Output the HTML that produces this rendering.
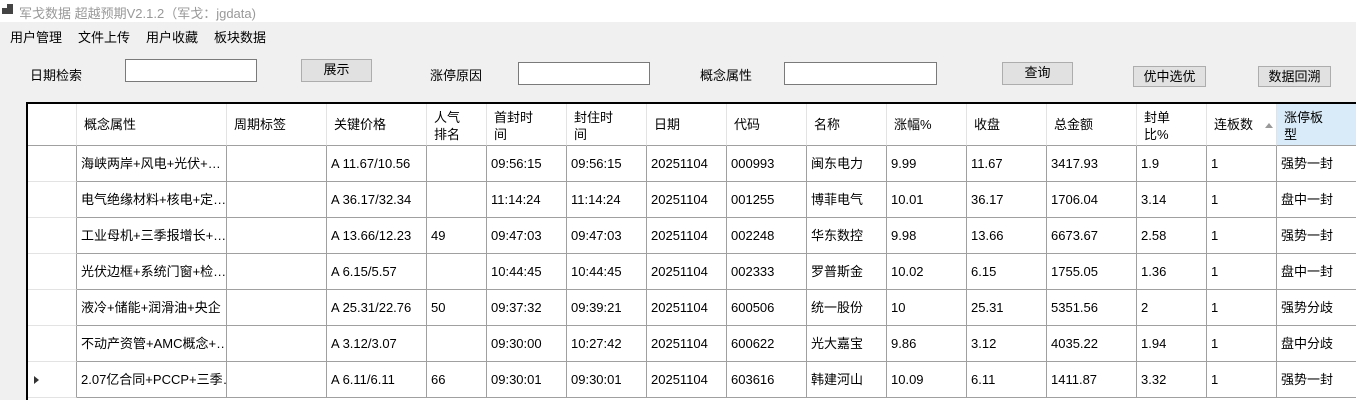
<!DOCTYPE html><html><head><meta charset="utf-8"><style>
body{margin:0;width:1356px;height:400px;overflow:hidden;background:#f0f0f0;font-family:"Liberation Sans","Noto Sans CJK SC",sans-serif;font-size:13px;color:#000;position:relative}
.a{position:absolute;white-space:nowrap}
.tb{background:#fff;border:1px solid #7a7a7a;box-sizing:border-box}
.bt{background:#e1e1e1;border:1px solid #adadad;box-sizing:border-box;text-align:center;line-height:19px}
#g{position:absolute;left:26px;top:102px;width:1340px;height:298px;background:#fff;border-left:2px solid #000;border-top:2px solid #000;box-sizing:border-box}
.c{position:absolute;box-sizing:border-box;border-right:1px solid #a0a0a0;border-bottom:1px solid #a0a0a0;padding-left:4px;line-height:35px;overflow:hidden;white-space:nowrap}
.h{border-right:1px solid #e3e3e3;border-bottom:1px solid #a0a0a0;padding-left:7px;line-height:17px;padding-top:5px}
.r{border-right:1px solid #a0a0a0;border-bottom:1px solid #e3e3e3}
</style></head><body>
<div class="a" style="left:0;top:0;width:1356px;height:22px;background:#fff"></div>
<div class="a" style="left:2px;top:8px;width:5px;height:6px;background:#444"></div><div class="a" style="left:7px;top:4px;width:6px;height:10px;background:#444"></div>
<div class="a" style="left:19px;top:3px;color:#999;font-size:13px">军戈数据 超越预期V2.1.2（军戈：jgdata)</div>
<div class="a" style="left:10px;top:27px">用户管理</div><div class="a" style="left:78px;top:27px">文件上传</div><div class="a" style="left:146px;top:27px">用户收藏</div><div class="a" style="left:214px;top:27px">板块数据</div>
<div class="a" style="left:30px;top:65px">日期检索</div>
<div class="a tb" style="left:125px;top:59px;width:132px;height:23px"></div>
<div class="a bt" style="left:301px;top:59px;width:71px;height:23px">展示</div>
<div class="a" style="left:430px;top:65px">涨停原因</div>
<div class="a tb" style="left:518px;top:62px;width:132px;height:23px"></div>
<div class="a" style="left:700px;top:65px">概念属性</div>
<div class="a tb" style="left:784px;top:62px;width:153px;height:23px"></div>
<div class="a bt" style="left:1002px;top:62px;width:71px;height:23px">查询</div>
<div class="a bt" style="left:1133px;top:66px;width:73px;height:21px">优中选优</div>
<div class="a bt" style="left:1258px;top:66px;width:73px;height:21px">数据回溯</div>
<div id="g"></div>
<div id="cells"></div>
<script>
var xs=[28,77,227,327,427,487,567,647,727,807,887,967,1047,1137,1207,1277,1366];
var hd=["","概念属性","周期标签","关键价格","人气<br>排名","首封时<br>间","封住时<br>间","日期","代码","名称","涨幅%","收盘","总金额","封单<br>比%","连板数","涨停板<br>型"];
var rows=[
["海峡两岸+风电+光伏+…","","A 11.67/10.56","","09:56:15","09:56:15","20251104","000993","闽东电力","9.99","11.67","3417.93","1.9","1","强势一封"],
["电气绝缘材料+核电+定…","","A 36.17/32.34","","11:14:24","11:14:24","20251104","001255","博菲电气","10.01","36.17","1706.04","3.14","1","盘中一封"],
["工业母机+三季报增长+…","","A 13.66/12.23","49","09:47:03","09:47:03","20251104","002248","华东数控","9.98","13.66","6673.67","2.58","1","强势一封"],
["光伏边框+系统门窗+检…","","A 6.15/5.57","","10:44:45","10:44:45","20251104","002333","罗普斯金","10.02","6.15","1755.05","1.36","1","盘中一封"],
["液冷+储能+润滑油+央企","","A 25.31/22.76","50","09:37:32","09:39:21","20251104","600506","统一股份","10","25.31","5351.56","2","1","强势分歧"],
["不动产资管+AMC概念+…","","A 3.12/3.07","","09:30:00","10:27:42","20251104","600622","光大嘉宝","9.86","3.12","4035.22","1.94","1","盘中分歧"],
["2.07亿合同+PCCP+三季…","","A 6.11/6.11","66","09:30:01","09:30:01","20251104","603616","韩建河山","10.09","6.11","1411.87","3.32","1","强势一封"]];
var h="";
for(var i=0;i<16;i++){var w=xs[i+1]-xs[i];var hl=hd[i].indexOf("<br>")<0?"line-height:42px;padding-top:0;":"";
var ex=i==15?"background:#d9ebf9;":"";
h+='<div class="c h" style="left:'+xs[i]+'px;top:104px;width:'+w+'px;height:42px;'+hl+ex+'">'+hd[i]+'</div>';}
h+='<div class="a" style="left:1265px;top:123px;width:0;height:0;border-left:4px solid transparent;border-right:4px solid transparent;border-bottom:5px solid #999"></div>';
for(var r=0;r<7;r++){var y=146+r*36;
h+='<div class="c r" style="left:28px;top:'+y+'px;width:49px;height:36px">'+(r==6?'<span style="display:inline-block;margin-left:2px;width:0;height:0;border-top:4px solid transparent;border-bottom:4px solid transparent;border-left:5px solid #333"></span>':'')+'</div>';
for(var i=1;i<16;i++){var w=xs[i+1]-xs[i];h+='<div class="c" style="left:'+xs[i]+'px;top:'+y+'px;width:'+w+'px;height:36px">'+rows[r][i-1]+'</div>';}}
document.getElementById("cells").innerHTML=h;
</script>
</body></html>
